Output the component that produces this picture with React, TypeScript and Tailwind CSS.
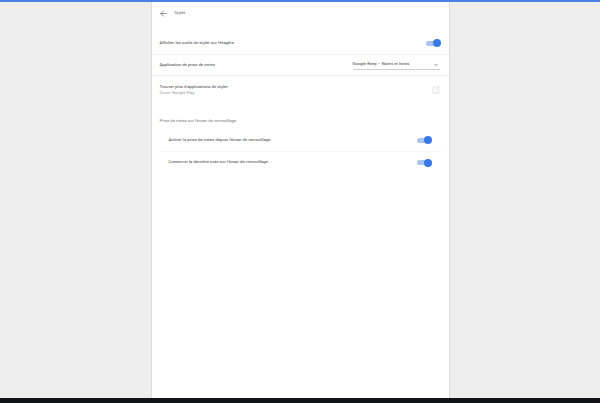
import { ArrowLeft, SquareArrowOutUpRight, ChevronDown } from 'lucide-react'

function Toggle() {
  return (
    <div className="relative w-[15px] h-[8px] flex items-center flex-shrink-0">
      <div className="w-[13px] h-[5px] rounded-full bg-[#a8c5f8]" />
      <div className="absolute right-0 top-0 w-[8px] h-[8px] rounded-full bg-[#3b78e7]" />
    </div>
  )
}

export default function App() {
  return (
    <div className="w-[600px] h-[403px] flex flex-col bg-[#eeeeee] overflow-hidden font-['Roboto',sans-serif]">
      <div className="h-[2px] bg-[#4a80e8] flex-shrink-0" />
      <div className="flex-1 flex justify-center min-h-0">
        <div className="w-[299px] bg-white border-x border-[#dedede]">
          {/* Header */}
          <div className="h-[23px] pl-[7px] flex items-center gap-[7px]">
            <ArrowLeft size={9} strokeWidth={1.6} className="text-[#4a4a4a]" />
            <span className="text-[4.3px] text-[#555]">Stylet</span>
          </div>

          <div className="h-[23px] mt-[7px] pl-[8px] pr-[8px] flex items-center justify-between border-b border-[#f4f4f4]">
            <span className="text-[4.3px] text-[#444]">Afficher les outils de stylet sur l'étagère</span>
            <Toggle />
          </div>

          <div className="h-[21px] pl-[8px] pr-[9px] flex items-center justify-between border-b border-[#f4f4f4]">
            <span className="text-[4.3px] text-[#444]">Application de prise de notes</span>
            <div className="w-[87px] h-[9px] flex items-center justify-between border-b border-[#d0d0d0]">
              <span className="text-[4.3px] text-[#444]">Google Keep – Notes et listes</span>
              <ChevronDown size={4} strokeWidth={4} className="text-[#444] mr-[2px]" />
            </div>
          </div>

          <div className="h-[27px] pl-[8px] pr-[9px] flex items-center justify-between">
            <div className="flex flex-col leading-[6px]">
              <span className="text-[4.3px] text-[#444]">Trouver plus d'applications de stylet</span>
              <span className="text-[4.3px] text-[#999]">Ouvrir Google Play</span>
            </div>
            <SquareArrowOutUpRight size={8} strokeWidth={1.2} className="text-[#b8b8b8]" />
          </div>

          <div className="mt-[13px] pl-[8px] h-[10px] flex items-center">
            <span className="text-[4.3px] text-[#777]">Prise de notes sur l'écran de verrouillage</span>
          </div>

          <div className="ml-[8px] mr-[8px] mt-[3px]">
            <div className="h-[23px] pl-[9px] pr-[9px] flex items-center justify-between border-b border-[#f4f4f4]">
              <span className="text-[4.3px] text-[#444]">Activer la prise de notes depuis l'écran de verrouillage</span>
              <Toggle />
            </div>
            <div className="h-[21px] pl-[9px] pr-[9px] flex items-center justify-between">
              <span className="text-[4.3px] text-[#444]">Conserver la dernière note sur l'écran de verrouillage</span>
              <Toggle />
            </div>
          </div>
        </div>
      </div>
      <div className="h-[5px] bg-[#111318] flex-shrink-0" />
    </div>
  )
}
